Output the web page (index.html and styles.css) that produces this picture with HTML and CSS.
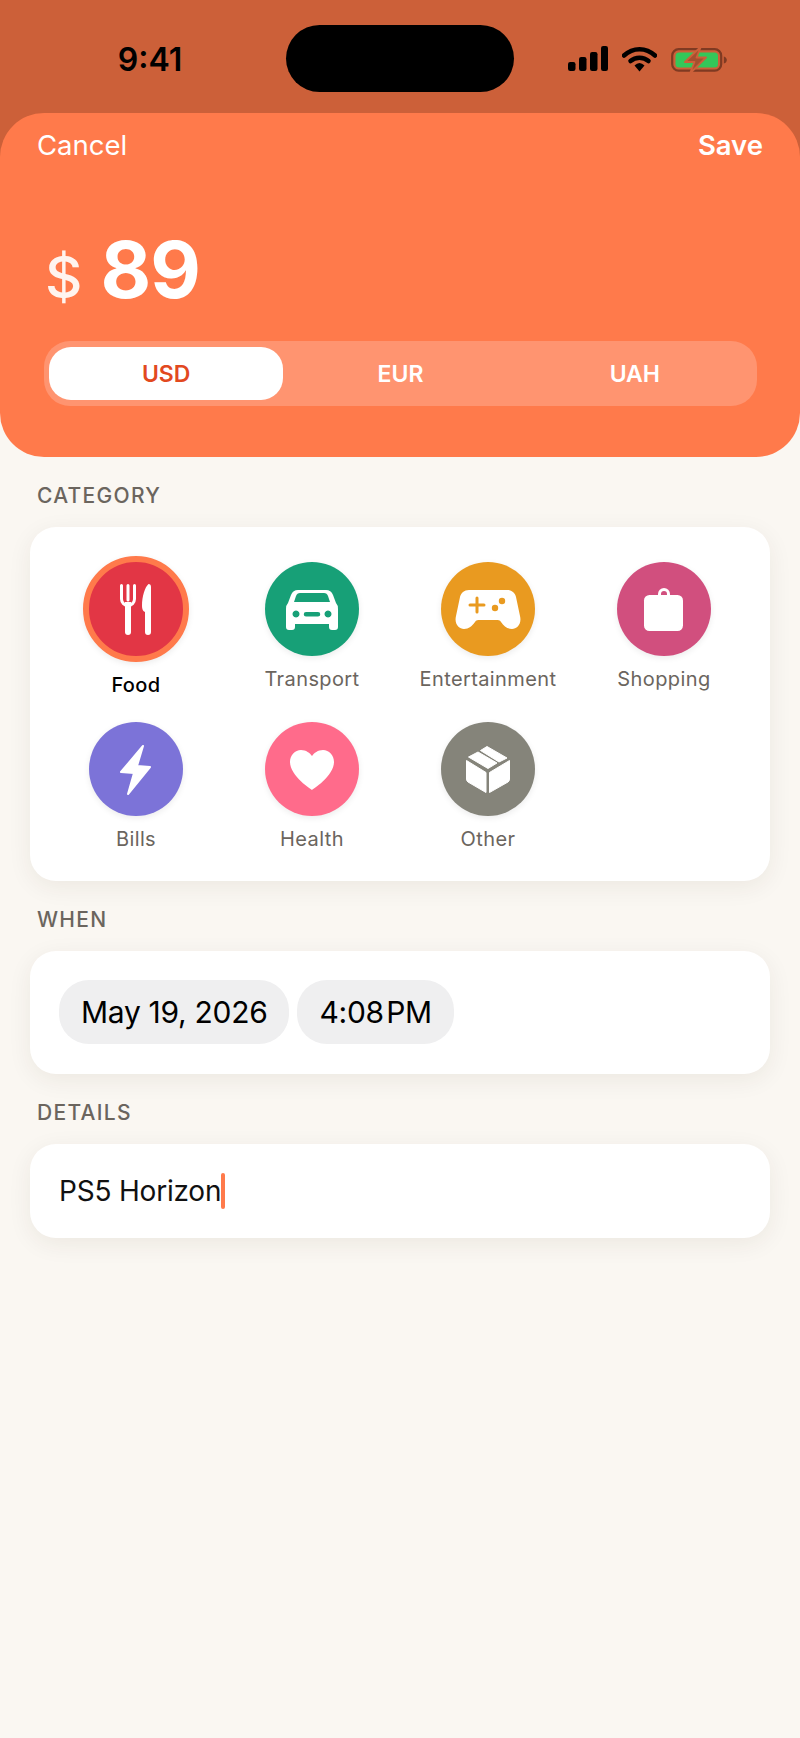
FILE: index.html
```html
<!DOCTYPE html>
<html lang="en">
<head>
    <meta charset="UTF-8">
    <meta name="viewport" content="width=device-width, initial-scale=1.0">
    <title>Add Expense</title>
    <link rel="stylesheet" href="styles.css">
</head>
<body>
    <div class="top">
        <div class="status-bar">
            <div class="time">9:41</div>
            <div class="island"></div>
            <div class="status-icons">
                <svg class="signal" width="40" height="26" viewBox="0 0 40 26">
                    <rect x="0" y="16" width="7.5" height="9" rx="2.2"/>
                    <rect x="11" y="11" width="7.5" height="14" rx="2.2"/>
                    <rect x="22" y="6" width="7.5" height="19" rx="2.2"/>
                    <rect x="33" y="0" width="7" height="25" rx="2.2"/>
                </svg>
                <svg class="wifi" width="35" height="26" viewBox="0 0 35 26">
                    <path d="M2 9.5C11 1 24 1 33 9.5" fill="none" stroke="#000" stroke-width="4.5" stroke-linecap="round"/>
                    <path d="M8.5 15C13.5 10.5 21.5 10.5 26.5 15" fill="none" stroke="#000" stroke-width="4.5" stroke-linecap="round"/>
                    <path d="M12.5 19.5Q17.5 14.5 22.5 19.5L17.5 25.5Z"/>
                </svg>
                <svg class="battery" width="56" height="28" viewBox="0 0 56 28">
                    <rect x="1.2" y="3.2" width="49" height="21.5" rx="6.5" fill="none" stroke="#7f3a22" stroke-width="2.2"/>
                    <rect x="4.5" y="6.5" width="42.5" height="15" rx="3.5" fill="#34c759"/>
                    <path d="M52.8 10.5c2 .5 3 2 3 3.5s-1 3-3 3.5z" fill="#7f3a22"/>
                    <path d="M30 .5L14 16h9.5L19 27.5l16-16h-9.5z" fill="#a4502f" stroke="#cc6039" stroke-width="1.8" stroke-linejoin="round"/>
                </svg>
            </div>
        </div>

        <div class="sheet">
            <div class="nav-row">
                <span class="nav-cancel">Cancel</span>
                <span class="nav-save">Save</span>
            </div>
            <div class="amount">
                <span class="amount-sign">$</span>
                <span class="amount-value">89</span>
            </div>
            <div class="segments">
                <div class="segment active">USD</div>
                <div class="segment">EUR</div>
                <div class="segment">UAH</div>
            </div>
        </div>
    </div>

    <div class="section-label">CATEGORY</div>
    <div class="card categories">
        <div class="category selected">
            <div class="circle food">
                <svg width="94" height="94" viewBox="0 0 94 94" fill="#fff">
                    <path d="M32.5 23.5V37a6.5 6.5 0 0 0 13 0V23.5M39 23.5V38" fill="none" stroke="#fff" stroke-width="3" stroke-linecap="round"/>
                    <path d="M36 40h6v30a3 3 0 0 1-6 0z"/>
                    <path d="M59.5 22Q62 22 62 25V70a3 3 0 0 1-6 0V50Q53 49 53 44C53 34 56 25 59.5 22Z"/>
                </svg>
            </div>
            <div class="category-name">Food</div>
        </div>
        <div class="category">
            <div class="circle transport">
                <svg width="94" height="94" viewBox="0 0 94 94" fill="#fff">
                    <path fill-rule="evenodd" d="M33 28H61Q66 28 68 33L71 41Q73 43 73 47V65a3 3 0 0 1-3 3H67a3 3 0 0 1-3-3V62H30V65a3 3 0 0 1-3 3H24a3 3 0 0 1-3-3V47Q21 43 23 41L26 33Q28 28 33 28ZM35 31Q32 31 31 34L29 40H65L63 34Q62 31 59 31ZM31 48.5a3.5 3.5 0 1 0 .01 0ZM63 48.5a3.5 3.5 0 1 0 .01 0ZM41 50a2 2 0 0 0 0 4.5H53a2 2 0 0 0 0-4.5Z"/>
                </svg>
            </div>
            <div class="category-name">Transport</div>
        </div>
        <div class="category">
            <div class="circle entertainment">
                <svg width="94" height="94" viewBox="0 0 94 94" fill="#fff">
                    <path d="M28 28H66C71 28 74 31 75 35L79 54C81 62 76 67 71 67C66 67 63 64 60 60C59 58 57 58 55 58H39C37 58 35 58 34 60C31 64 28 67 23 67C18 67 13 62 15 54L19 35C20 31 23 28 28 28Z"/>
                    <path d="M36 36V50M29 43H43" stroke="#e99a20" stroke-width="3" stroke-linecap="round"/>
                    <circle cx="61" cy="39" r="3.2" fill="#e99a20"/>
                    <circle cx="54" cy="46" r="3.2" fill="#e99a20"/>
                </svg>
            </div>
            <div class="category-name">Entertainment</div>
        </div>
        <div class="category">
            <div class="circle shopping">
                <svg width="94" height="94" viewBox="0 0 94 94" fill="#fff">
                    <rect x="27" y="33" width="39" height="36" rx="5.5"/>
                    <path d="M42.5 34V32a4.5 4.5 0 0 1 9 0V34" fill="none" stroke="#fff" stroke-width="3"/>
                </svg>
            </div>
            <div class="category-name">Shopping</div>
        </div>
        <div class="category">
            <div class="circle bills">
                <svg width="94" height="94" viewBox="0 0 94 94" fill="#fff">
                    <path d="M54 24L32 50L45 51L39 72L61 45L48 44Z" stroke="#fff" stroke-width="2" stroke-linejoin="round"/>
                </svg>
            </div>
            <div class="category-name">Bills</div>
        </div>
        <div class="category">
            <div class="circle health">
                <svg width="94" height="94" viewBox="0 0 94 94" fill="#fff">
                    <path d="M47 68C47 68 25 54 25 40C25 33 30 28 36 28C41 28 45 31 47 34C49 31 53 28 58 28C64 28 69 33 69 40C69 54 47 68 47 68Z"/>
                </svg>
            </div>
            <div class="category-name">Health</div>
        </div>
        <div class="category">
            <div class="circle other">
                <svg width="94" height="94" viewBox="0 0 94 94" fill="#fff" stroke="#fff" stroke-width="1" stroke-linejoin="round">
                    <path d="M25.5 38.5L45 50.5V70.5L27 60Q25.5 59 25.5 57Z"/>
                    <path d="M68.5 38.5L48.5 50.5V70.5L67 60Q68.5 59 68.5 57Z"/>
                    <path d="M27.5 35L37 30L56 41L47 46.5Z"/>
                    <path d="M39.5 28.5L46 24.5L66 36L58 40Z"/>
                </svg>
            </div>
            <div class="category-name">Other</div>
        </div>
    </div>

    <div class="section-label">WHEN</div>
    <div class="card when">
        <div class="pill">May 19, 2026</div>
        <div class="pill">4:08&#8202;PM</div>
    </div>

    <div class="section-label">DETAILS</div>
    <div class="card details">
        <span class="details-text">PS5 Horizon</span><span class="caret"></span>
    </div>
</body>
</html>
```

FILE: styles.css
```css
* {
    box-sizing: border-box;
}
body {
    margin: 0;
    width: 800px;
    height: 1738px;
    overflow: hidden;
    background-color: #faf7f2;
    font-family: Inter, "Liberation Sans", sans-serif;
    color: #000;
}

.top {
    background: linear-gradient(#cc6039, #cc6039) top / 100% 200px no-repeat;
}
.status-bar {
    height: 113px;
    display: flex;
    align-items: flex-start;
}
.time {
    width: 286px;
    padding-top: 41px;
    padding-left: 14px;
    text-align: center;
    font-size: 32px;
    line-height: 38px;
    font-weight: 600;
}
.island {
    width: 228px;
    height: 67px;
    margin-top: 25px;
    border-radius: 34px;
    background-color: #000;
}
.status-icons {
    display: flex;
    align-items: flex-start;
    margin-left: 54px;
    margin-top: 46px;
    gap: 14px;
}

.sheet {
    height: 344px;
    background-color: #ff7a4b;
    border-radius: 44px;
    padding: 15px 37px 0;
}
.nav-row {
    display: flex;
    justify-content: space-between;
    font-size: 27.5px;
    line-height: 34px;
    color: #fff;
}
.nav-save {
    font-weight: 600;
}
.amount {
    display: flex;
    align-items: baseline;
    gap: 18px;
    margin-top: 58px;
    padding-left: 8px;
    height: 100px;
    color: #fff;
}
.amount-sign {
    font-size: 58px;
    line-height: 100px;
    font-weight: 500;
    color: #fff4ef;
}
.amount-value {
    font-size: 78px;
    line-height: 100px;
    font-weight: 700;
    letter-spacing: -1px;
}
.segments {
    display: flex;
    margin: 21px 6px 0 7px;
    height: 65px;
    padding: 6px 5px;
    border-radius: 26px;
    background-color: #ff9470;
}
.segment {
    flex: 1;
    display: flex;
    align-items: center;
    justify-content: center;
    font-size: 23px;
    font-weight: 600;
    color: #fff;
    border-radius: 22px;
}
.segment.active {
    background-color: #fff;
    color: #e2491f;
}

.section-label {
    margin: 27px 37px 19px;
    font-size: 21px;
    line-height: 24px;
    font-weight: 500;
    letter-spacing: 1.3px;
    color: #6b655e;
}

.card {
    margin: 0 30px;
    background-color: #fff;
    border-radius: 26px;
    box-shadow: 0 6px 24px rgba(60, 40, 20, 0.07);
}

.categories {
    display: grid;
    grid-template-columns: repeat(4, 1fr);
    row-gap: 25px;
    align-items: start;
    padding: 35px 18px 30px;
}
.category {
    display: flex;
    flex-direction: column;
    align-items: center;
    gap: 11px;
}
.circle {
    width: 94px;
    height: 94px;
    border-radius: 50%;
    box-shadow: 0 2px 6px rgba(0, 0, 0, 0.08);
}
.circle svg {
    display: block;
}
.selected .circle {
    width: 106px;
    height: 106px;
    margin-top: -6px;
    border: 6px solid #ff7a4b;
}
.category-name {
    font-size: 20px;
    line-height: 24px;
    letter-spacing: 0.4px;
    color: #6b655e;
    white-space: nowrap;
}
.selected .category-name {
    font-weight: 500;
    color: #000;
}
.food { background-color: #e23645; }
.transport { background-color: #17a077; }
.entertainment { background-color: #e99a20; }
.shopping { background-color: #d14f7e; }
.bills { background-color: #7c73d8; }
.health { background-color: #ff6b8b; }
.other { background-color: #85847a; }

.when {
    display: flex;
    gap: 8px;
    height: 123px;
    padding: 29px;
}
.pill {
    display: flex;
    align-items: center;
    height: 64px;
    padding: 0 22px;
    border-radius: 30px;
    background-color: #efeff0;
    font-size: 30px;
    letter-spacing: -0.3px;
}

.details {
    display: flex;
    align-items: center;
    height: 94px;
    padding-left: 29px;
    font-size: 28px;
    letter-spacing: -0.2px;
    color: #111;
}
.caret {
    width: 3.5px;
    height: 36px;
    border-radius: 2px;
    background-color: #ff7a4b;
}
```
